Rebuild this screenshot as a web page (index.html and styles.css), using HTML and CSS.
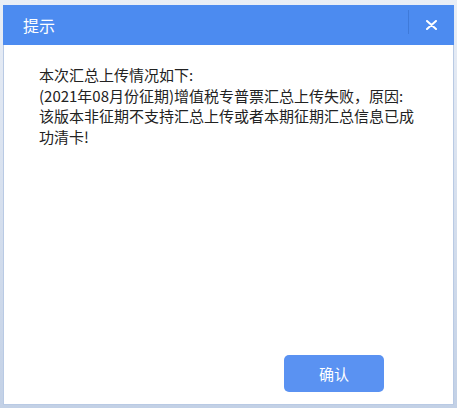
FILE: index.html
```html
<!DOCTYPE html>
<html lang="zh-CN">
<head>
  <meta charset="UTF-8">
  <title>提示</title>
  <link rel="stylesheet" href="styles.css">
</head>
<body>
  <div class="dialog">
    <div class="dialog-header">
      <span class="dialog-title">提示</span>
      <span class="divider"></span>
      <button class="close-btn" aria-label="关闭">
        <svg width="11" height="10" viewBox="0 0 11 10">
          <path d="M1 1 L10 9 M10 1 L1 9" stroke="#ffffff" stroke-width="2" stroke-linecap="round"/>
        </svg>
      </button>
    </div>
    <div class="dialog-body">
      <p>本次汇总上传情况如下:</p>
      <p>(2021年08月份征期)增值税专普票汇总上传失败，原因:</p>
      <p>该版本非征期不支持汇总上传或者本期征期汇总信息已成功清卡!</p>
    </div>
    <div class="dialog-footer">
      <button class="confirm-btn">确认</button>
    </div>
  </div>
</body>
</html>
```

FILE: styles.css
```css
:root {
  --header-blue: #4c8bf0;
  --btn-blue: #5a92f2;
  --frame: #d3ddec;
  --text-dark: #222222;
  --font-family: "Microsoft YaHei", "Noto Sans CJK SC", "Noto Sans", sans-serif;
}
* { box-sizing: border-box; margin: 0; padding: 0; }
html, body { height: 100%; }
body {
  background: linear-gradient(#e9eef6, #c3d1e6);
  font-family: var(--font-family);
  padding: 5px 3px 3px 3px;
}
.dialog {
  height: 400px;
  background: #ffffff;
  border: 1px solid #b9cae4;
  border-top: none;
  display: flex;
  flex-direction: column;
}
.dialog-header {
  height: 40px;
  background: var(--header-blue);
  display: flex;
  align-items: center;
  padding-left: 20px;
  margin: 0 -1px;
}
.dialog-title {
  flex: 1;
  color: #ffffff;
  font-size: 16px;
}
.divider {
  width: 1px;
  height: 24px;
  margin-top: -6px;
  background: #3f7ad9;
}
.close-btn {
  width: 45px;
  height: 40px;
  border: none;
  background: transparent;
  display: flex;
  align-items: center;
  justify-content: center;
  cursor: pointer;
  padding-bottom: 1px;
}
.dialog-body {
  flex: 1;
  padding: 20px 0 0 35px;
  width: 418px;
  color: var(--text-dark);
  font-size: 15px;
  line-height: 20.7px;
}
.dialog-footer {
  display: flex;
  justify-content: flex-end;
  padding: 0 69px 12px 0;
}
.confirm-btn {
  width: 100px;
  height: 37px;
  border: none;
  border-radius: 5px;
  background: var(--btn-blue);
  color: #ffffff;
  font-family: var(--font-family);
  font-size: 15px;
  cursor: pointer;
}
```
